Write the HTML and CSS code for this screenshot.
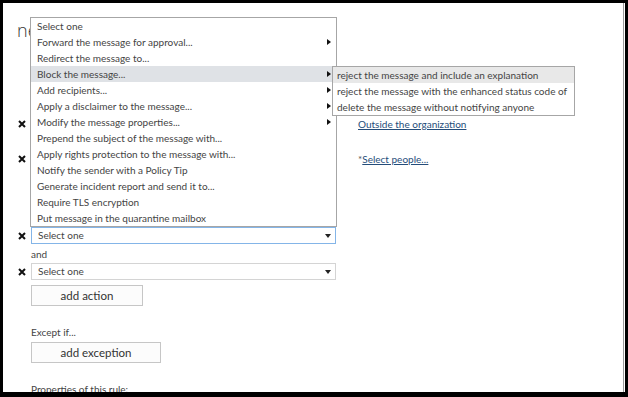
FILE: index.html
```html
<!DOCTYPE html>
<html lang="en">
<head>
    <meta charset="UTF-8">
    <title>new rule</title>
    <link rel="stylesheet" href="styles.css">
</head>
<body>
    <div class="frame">
        <div class="page">
            <h1 class="title">new rule</h1>

            <div class="row first">
                <span class="remove"><svg viewBox="0 0 8 8" width="8" height="8"><path d="M1 1 L7 7 M7 1 L1 7" stroke="#111" stroke-width="2"/></svg></span>
                <div class="select"><span class="caret"></span></div>
                <a class="link" href="#">Outside the organization</a>
            </div>

            <div class="row second">
                <span class="remove"><svg viewBox="0 0 8 8" width="8" height="8"><path d="M1 1 L7 7 M7 1 L1 7" stroke="#111" stroke-width="2"/></svg></span>
                <div class="select"><span class="caret"></span></div>
                <span class="link-wrap"><span class="star">*</span><a class="link" href="#">Select people...</a></span>
            </div>

            <div class="row third">
                <span class="remove"><svg viewBox="0 0 8 8" width="8" height="8"><path d="M1 1 L7 7 M7 1 L1 7" stroke="#111" stroke-width="2"/></svg></span>
                <div class="select focused">Select one<span class="caret"></span></div>
            </div>

            <div class="label and">and</div>

            <div class="row fourth">
                <span class="remove"><svg viewBox="0 0 8 8" width="8" height="8"><path d="M1 1 L7 7 M7 1 L1 7" stroke="#111" stroke-width="2"/></svg></span>
                <div class="select">Select one<span class="caret"></span></div>
            </div>

            <button class="btn add-action">add action</button>

            <div class="label except">Except if...</div>

            <button class="btn add-exception">add exception</button>

            <div class="label props">Properties of this rule:</div>
        </div>

        <ul class="menu">
            <li>Select one</li>
            <li class="sub">Forward the message for approval...</li>
            <li>Redirect the message to...</li>
            <li class="sub hover">Block the message...</li>
            <li class="sub">Add recipients...</li>
            <li class="sub">Apply a disclaimer to the message...</li>
            <li class="sub">Modify the message properties...</li>
            <li>Prepend the subject of the message with...</li>
            <li>Apply rights protection to the message with...</li>
            <li>Notify the sender with a Policy Tip</li>
            <li>Generate incident report and send it to...</li>
            <li>Require TLS encryption</li>
            <li>Put message in the quarantine mailbox</li>
        </ul>

        <ul class="submenu">
            <li class="hover">reject the message and include an explanation</li>
            <li>reject the message with the enhanced status code of</li>
            <li>delete the message without notifying anyone</li>
        </ul>
    </div>
</body>
</html>
```

FILE: styles.css
```css
body {
    margin: 0;
    padding: 0;
    background-color: #fff;
    font-family: 'Lato', 'Open Sans', sans-serif;
    font-size: 10px;
    color: #444;
}
.frame {
    width: 628px;
    height: 397px;
    box-sizing: border-box;
    border: 3px solid #000;
    border-bottom-width: 5px;
    position: relative;
    overflow: hidden;
}
.page {
    height: 100%;
    box-sizing: border-box;
    margin-right: 1px;
    border-right: 1px solid #9a9a9a;
    padding-left: 13px;
    overflow: hidden;
}
.title {
    margin: 0;
    padding-top: 17px;
    padding-left: 1px;
    font-family: 'Open Sans', sans-serif;
    font-size: 18px;
    font-weight: 300;
    line-height: 20px;
    color: #333;
}
.row {
    display: flex;
    align-items: center;
    height: 17px;
}
.row.first {
    margin-top: 75px;
}
.row.second {
    margin-top: 18px;
}
.row.third {
    margin-top: 60px;
}
.row.fourth {
    margin-top: 2px;
}
.remove {
    width: 15px;
    display: flex;
    align-items: center;
    padding-left: 2px;
    box-sizing: border-box;
}
.select {
    width: 305px;
    height: 17px;
    box-sizing: border-box;
    border: 1px solid #d4d4d4;
    padding-left: 6px;
    line-height: 15px;
    position: relative;
    color: #444;
}
.select.focused {
    border-color: #84b5e8;
}
.caret {
    position: absolute;
    right: 4px;
    top: 6px;
    width: 0;
    height: 0;
    border-left: 3px solid transparent;
    border-right: 3px solid transparent;
    border-top: 4px solid #222;
}
.link {
    color: #254d7a;
    text-decoration: underline;
}
.row > .link, .link-wrap {
    margin-left: 22px;
}
.star {
    color: #555;
}
.label {
    margin-left: 15px;
    line-height: 14px;
}
.label.and {
    margin-top: 3px;
}
.label.except {
    margin-top: 19px;
}
.label.props {
    margin-top: 19px;
}
.btn {
    display: block;
    margin: 5px 0 0 15px;
    height: 21px;
    padding: 0;
    border: 1px solid #c6c6c6;
    background-color: #fcfcfc;
    font-family: 'Lato', 'Open Sans', sans-serif;
    font-size: 11.5px;
    color: #333;
}
.add-action {
    width: 112px;
}
.add-exception {
    width: 130px;
    margin-top: 3px;
}
.menu, .submenu {
    list-style: none;
    margin: 0;
    padding: 0;
    position: absolute;
    background-color: #fff;
    border: 1px solid #a6a6a6;
}
.menu {
    left: 27px;
    top: 14px;
    width: 305px;
}
.menu li, .submenu li {
    height: 16px;
    line-height: 16px;
    padding-left: 6px;
    white-space: nowrap;
    position: relative;
}
.menu li.hover {
    background-color: #dfe2e6;
}
.menu li.sub::after {
    content: "";
    position: absolute;
    right: 5px;
    top: 5px;
    border-top: 3px solid transparent;
    border-bottom: 3px solid transparent;
    border-left: 4px solid #111;
}
.submenu {
    left: 329px;
    top: 63px;
    width: 241px;
}
.submenu li {
    padding-left: 4px;
}
.submenu li.hover {
    background-color: #e8e8e8;
}
```
